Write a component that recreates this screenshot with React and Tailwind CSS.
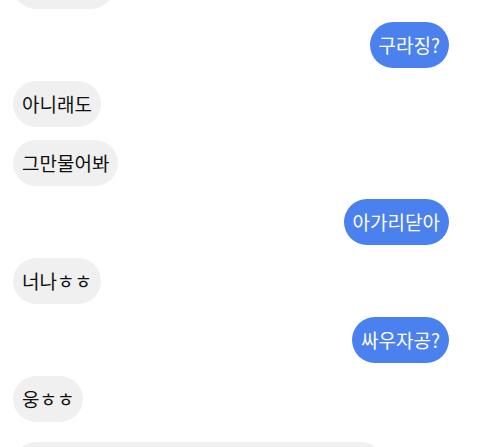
import React from 'react'

const messages = [
  { id: 0, mine: false, text: '응 그래서?' },
  { id: 1, mine: true, text: '구라징?' },
  { id: 2, mine: false, text: '아니래도' },
  { id: 3, mine: false, text: '그만물어봐' },
  { id: 4, mine: true, text: '아가리닫아' },
  { id: 5, mine: false, text: '너나ㅎㅎ' },
  { id: 6, mine: true, text: '싸우자공?' },
  { id: 7, mine: false, text: '웅ㅎㅎ' },
  { id: 8, mine: false, text: '근데 진짜로 오늘 저녁에 뭐 먹을지 아직도 못 정했는데 너는 뭐 먹고 싶은 거 있어? 빨리 말해줘', last: true },
]

const Bubble = ({ msg }) => (
  <div className={`flex ${msg.mine ? 'justify-end' : 'justify-start'} ${msg.last ? 'mt-[7px]' : ''}`}>
    <div
      className={`rounded-[23px] px-[9px] py-[10px] text-[19px] leading-[26px] max-w-[371px] ${
        msg.mine ? 'bg-[#4b80ef] text-white' : 'bg-[#f0f0f0] text-[#111111]'
      } ${msg.last ? 'w-[371px]' : ''}`}
    >
      {msg.text}
    </div>
  </div>
)

const App = () => {
  return (
    <div
      className="w-[480px] h-[447px] overflow-hidden bg-white"
      style={{ fontFamily: '"Noto Sans CJK KR", "Noto Sans", sans-serif' }}
    >
      <div className="flex flex-col gap-[13px] pl-[13px] pr-[31px] -mt-[37px]">
        {messages.map((msg) => (
          <Bubble key={msg.id} msg={msg} />
        ))}
      </div>
    </div>
  )
}

export default App
